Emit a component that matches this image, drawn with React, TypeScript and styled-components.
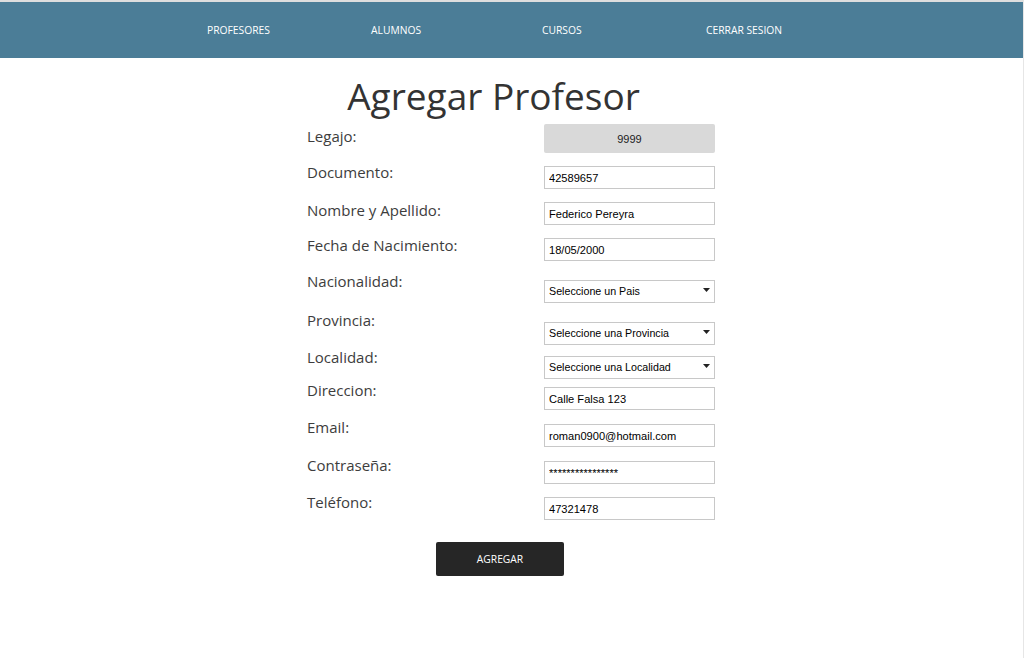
import React from "react";
import styled, { createGlobalStyle } from "styled-components";

const Global = createGlobalStyle`
  html, body { margin: 0; padding: 0; background: #fff; }
  body { font-family: "Open Sans", "Liberation Sans", sans-serif; }
  * { box-sizing: border-box; }
`;

const Page = styled.div`
  min-height: 658px;
  border-top: 2px solid #dedede;
  border-right: 1px solid #e6e6e6;
  padding-right: 1px;
  background: #fff;
`;

const Nav = styled.nav`
  height: 56px;
  margin-right: -1px;
  background: #4b7d97;
  display: grid;
  grid-template-columns: 164px 171px 164px auto;
  align-items: center;
  padding-left: 207px;
`;

const NavLink = styled.a`
  color: #fff;
  font-family: "Open Sans", sans-serif;
  font-size: 10.3px;
  text-decoration: none;
  text-transform: uppercase;
  white-space: nowrap;
`;

const Main = styled.main`
  width: 408px;
  margin: 0 auto;
  display: flex;
  flex-direction: column;
`;

const Title = styled.h1`
  margin: 14px 0 0 0;
  padding-right: 35px;
  font-family: "Open Sans", sans-serif;
  font-weight: 400;
  font-size: 37px;
  line-height: 48px;
  color: #333;
  text-align: center;
`;

const Form = styled.form`
  display: flex;
  flex-direction: column;
  margin-top: 4px;
`;

const Row = styled.div<{ h: number }>`
  display: flex;
  justify-content: space-between;
  align-items: flex-start;
  height: ${(p) => p.h}px;
`;

const Label = styled.label<{ top?: number }>`
  margin-top: ${(p) => p.top ?? 1}px;
  font-family: "Open Sans", sans-serif;
  font-size: 15px;
  line-height: 20px;
  color: #3d3d3d;
`;

const Input = styled.input<{ off: number }>`
  margin-top: ${(p) => p.off}px;
  width: 171px;
  height: 23px;
  border: 1px solid #c8c8c8;
  border-radius: 0;
  padding: 0 0 0 4px;
  font-family: "Liberation Sans", Arial, sans-serif;
  font-size: 11.1px;
  color: #000;
  background: #fff;
  outline: none;
`;

const Readonly = styled.div`
  width: 171px;
  height: 29px;
  background: #d9d9d9;
  border-radius: 2px;
  display: flex;
  align-items: center;
  justify-content: center;
  font-family: "Liberation Sans", Arial, sans-serif;
  font-size: 11px;
  color: #222;
`;

const SelectWrap = styled.div<{ off: number }>`
  position: relative;
  margin-top: ${(p) => p.off}px;
  width: 171px;
  height: 23px;
`;

const Select = styled.select`
  appearance: none;
  -webkit-appearance: none;
  width: 100%;
  height: 100%;
  border: 1px solid #c8c8c8;
  border-radius: 0;
  padding: 0 0 0 4px;
  font-family: "Liberation Sans", Arial, sans-serif;
  font-size: 10.7px;
  color: #000;
  background: #fff;
  outline: none;
`;

const Caret = styled.svg`
  position: absolute;
  right: 5px;
  top: 10px;
  pointer-events: none;
`;

const ButtonRow = styled.div`
  display: flex;
  padding-left: 129px;
  margin-top: 22px;
`;

const Button = styled.button`
  width: 128px;
  height: 34px;
  background: #262626;
  border: none;
  border-radius: 2px;
  color: #fff;
  font-family: "Open Sans", sans-serif;
  font-size: 10.3px;
  text-transform: uppercase;
  cursor: pointer;
`;

type Field = {
  kind: "text" | "select";
  label: string;
  value: string;
  h: number;
  off: number;
};

const fields: Field[] = [
  { kind: "text", label: "Documento:", value: "42589657", h: 38, off: 5 },
  { kind: "text", label: "Nombre y Apellido:", value: "Federico Pereyra", h: 35, off: 3 },
  { kind: "text", label: "Fecha de Nacimiento:", value: "18/05/2000", h: 36, off: 4 },
  { kind: "select", label: "Nacionalidad:", value: "Seleccione un Pais", h: 39, off: 8 },
  { kind: "select", label: "Provincia:", value: "Seleccione una Provincia", h: 37, off: 11 },
  { kind: "select", label: "Localidad:", value: "Seleccione una Localidad", h: 33, off: 8 },
  { kind: "text", label: "Direccion:", value: "Calle Falsa 123", h: 37, off: 8 },
  { kind: "text", label: "Email:", value: "roman0900@hotmail.com", h: 38, off: 8 },
  { kind: "text", label: "Contraseña:", value: "****************", h: 37, off: 7 },
  { kind: "text", label: "Teléfono:", value: "47321478", h: 29, off: 6 },
];

export default function App() {
  return (
    <>
      <Global />
      <Page>
        <Nav>
          <NavLink href="#">Profesores</NavLink>
          <NavLink href="#">Alumnos</NavLink>
          <NavLink href="#">Cursos</NavLink>
          <NavLink href="#">Cerrar Sesion</NavLink>
        </Nav>
        <Main>
          <Title>Agregar Profesor</Title>
          <Form onSubmit={(e) => e.preventDefault()}>
            <Row h={37}>
              <Label top={2}>Legajo:</Label>
              <Readonly>9999</Readonly>
            </Row>
            {fields.map((f) => (
              <Row key={f.label} h={f.h}>
                <Label>{f.label}</Label>
                {f.kind === "text" ? (
                  <Input off={f.off} defaultValue={f.value} />
                ) : (
                  <SelectWrap off={f.off}>
                    <Select defaultValue={f.value}>
                      <option>{f.value}</option>
                    </Select>
                    <Caret width="7" height="4" viewBox="0 0 7 4">
                      <path d="M0 0 H7 L3.5 4 Z" fill="#222" />
                    </Caret>
                  </SelectWrap>
                )}
              </Row>
            ))}
            <ButtonRow>
              <Button type="submit">Agregar</Button>
            </ButtonRow>
          </Form>
        </Main>
      </Page>
    </>
  );
}
